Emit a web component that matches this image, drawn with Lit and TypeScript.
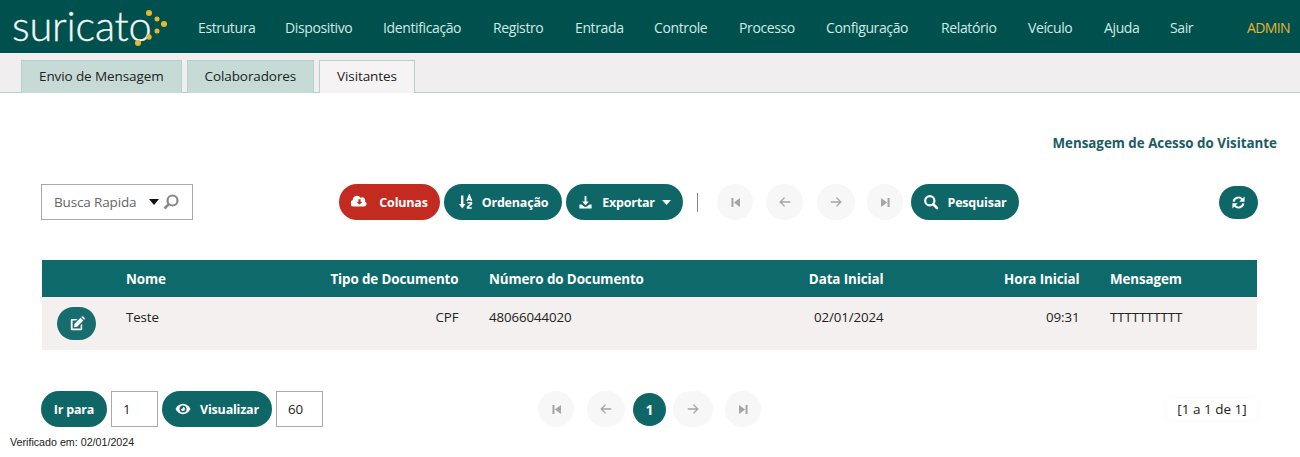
import { LitElement, html, css, svg } from "lit";
import { customElement } from "lit/decorators.js";

const ic = {
  cloud: svg`<path fill="currentColor" d="M13.200 7.100A2.900 2.900 0 0 0 9 3.600 4 4 0 0 0 1.600 5.600v.3a3 3 0 0 0 1 5.900h10a2.500 2.500 0 0 0 .6-4.700z"/><path fill="#c42b20" d="M7 5h2v2.400h1.700L8 10.200 5.300 7.400H7z"/>`,
  sort: svg`<path fill="currentColor" d="M3 1.500h2.400V10h2.100L4.200 14.500 1 10h2z"/><path fill="none" stroke="currentColor" stroke-width="1.600" d="M9 7 11.300 1.500 13.600 7M9.800 5.400h3M9.400 8.800h4v1l-3.800 3.400v.8h4.200"/>`,
  down: svg`<path fill="currentColor" d="M7 1h2v6h2.600L8 10.800 4.400 7H7z"/><path fill="currentColor" d="M1.500 10H4l2.600 2.400h2.800L12 10h2.500v4.500h-13z"/>`,
  first: svg`<path fill="currentColor" d="M3 2.500h2.500v11H3zM6 8l7.500-5.500v11z"/>`,
  last: svg`<path fill="currentColor" d="M10.500 2.500H13v11h-2.500zM10 8l-7.500 5.500v-11z"/>`,
  left: svg`<path fill="none" stroke="currentColor" stroke-width="1.500" d="M14 8H2.500M7.500 3 2.500 8l5 5"/>`,
  right: svg`<path fill="none" stroke="currentColor" stroke-width="1.500" d="M2 8h11.500M8.500 3l5 5-5 5"/>`,
  search: svg`<circle cx="6.800" cy="6.800" r="4.600" fill="none" stroke="currentColor" stroke-width="2.200"/><path stroke="currentColor" stroke-width="2.600" stroke-linecap="round" d="m10.500 10.500 3.500 3.500"/>`,
  sync: svg`<path fill="none" stroke="currentColor" stroke-width="2.300" d="M2.800 7a5.200 5.200 0 0 1 9-2.600L13 6M13.200 9a5.200 5.200 0 0 1-9 2.600L3 10"/><path fill="currentColor" d="M14.500 1.500v5.800H8.700zM1.500 14.500V8.700h5.800z"/>`,
  eye: svg`<path fill="currentColor" fill-rule="evenodd" d="M8 2.800c3.300 0 6 2.200 7.500 5.200-1.500 3-4.200 5.200-7.500 5.200S2 11 .5 8C2 5 4.700 2.800 8 2.800zm0 1.700a3.500 3.500 0 1 0 0 7 3.500 3.500 0 0 0 0-7z"/><path fill="currentColor" d="M8 6a2 2 0 1 1-2 2c.6.300 2.300-.7 2-2z"/>`,
  edit: svg`<path fill="currentColor" d="M2.800 3H8.500L7 4.600H3.600v8h8V9.300l1.600-1.500v5.400a1 1 0 0 1-1 1H2.800a1 1 0 0 1-1-1V4a1 1 0 0 1 1-1z"/><path fill="currentColor" d="M11.500 1.800 14.300 4.600 8.200 10.800l-3.100.400.300-3.200zM12.300 1l.6-.5a1 1 0 0 1 1.300 0l1.400 1.400a1 1 0 0 1 0 1.300l-.5.600z"/>`,
};
const icon = (p: unknown, s = 14) => html`<svg class="i" viewBox="0 0 16 16" width=${s} height=${s}>${p}</svg>`;

const NAV = ["Estrutura", "Dispositivo", "Identificação", "Registro", "Entrada", "Controle", "Processo", "Configuração", "Relatório", "Veículo", "Ajuda", "Sair"];

@customElement("app-root")
export class AppRoot extends LitElement {
  static styles = css`
    :host { display: block; width: 1300px; height: 457px; overflow: hidden; background: #fff; font-family: "Open Sans", "Noto Sans", sans-serif; color: #222; font-size: 13px; }
    .i { display: block; flex: none; }
    header { height: 53px; background: #00514d; display: flex; align-items: center; padding-left: 12px; box-sizing: border-box; }
    .logo { width: 156px; height: 53px; display: flex; align-items: flex-start; position: relative; flex: none; }
    .logo span { font-family: "Lato", sans-serif; font-weight: 300; -webkit-text-stroke: 0.35px #f4f7f4; font-size: 41.500px; letter-spacing: -0.2px; color: #f4f7f4; line-height: 51px; }
    .logo svg { position: absolute; left: -12px; top: 0; }
    nav { margin-left: 30px; display: flex; align-items: center; flex: 1; padding-top: 2px; }
    nav a { width: var(--w); color: #d3e8e3; font-size: 14px; letter-spacing: -0.38px; white-space: nowrap; }
    .admin { color: #eab232; font-size: 14px; letter-spacing: -0.6px; margin-left: auto; padding-right: 10px; }
    .tabs { height: 40px; box-sizing: border-box; background: #f0eeee; border-bottom: 1px solid #a9d2c9; padding: 7px 0 0 21px; display: flex; gap: 5px; }
    .tab { box-sizing: border-box; height: 33px; padding: 0 17px; line-height: 31px; background: #c6dbd5; border: 1px solid #b4d2cb; border-bottom: none; font-size: 13.500px; letter-spacing: -0.1px; color: #222; }
    .tab.on { background: #f5f3f3; }
    .title { text-align: right; padding: 41px 23px 0 0; height: 91px; box-sizing: border-box; font-weight: 700; font-size: 13.350px; line-height: 18px; color: #1b5b64; }
    .bar { height: 36px; display: flex; align-items: center; padding-left: 41px; }
    .search { width: 152px; height: 36px; box-sizing: border-box; border: 1px solid #aaa; display: flex; align-items: center; padding-left: 12px; color: #666; font-size: 13.500px; letter-spacing: -0.15px; }
    .search .caret { margin-left: 13px; color: #111; }
    .search .mag { margin-left: 3px; color: #888; }
    .btn { height: 36px; border-radius: 18px; background: #0e6666; color: #fff; border: 0; display: inline-flex; align-items: center; justify-content: center; gap: 11px; font-family: inherit; font-weight: 700; font-size: 12.500px; letter-spacing: -0.2px; box-sizing: border-box; padding: 0; flex: none; }
    .btn.red { background: #c42b20; }
    .sep { width: 1px; height: 19px; background: #888; margin: 0 19px 0 14px; }
    .c { height: 36px; border-radius: 18px; background: #f7f7f7; color: #a5a5a5; display: flex; align-items: center; justify-content: center; flex: none; }
    .t { margin: 40px 43px 0 42px; display: grid; grid-template-columns: 69px 189px 174px 250px 175px 196px 162px; }
    .t > div { padding: 0 15px; white-space: nowrap; }
    .h { background: #0e6a6a; color: #fff; font-weight: 700; height: 37px; line-height: 38px; font-size: 13.400px; letter-spacing: -0.1px; }
    .r { background: #f3f0ef; height: 53px; padding-top: 10px !important; line-height: 20px; box-sizing: border-box; font-size: 13.300px; letter-spacing: -0.1px; color: #222; }
    .t > .right { text-align: right; padding-right: 15.500px; }
    .edit { width: 39px; height: 33px; border-radius: 17px; background: #176c6e; color: #fff; display: flex; align-items: center; justify-content: center; }
    .t > .r.a { padding: 0 0 0 15px !important; display: flex; align-items: center; }
    .foot { margin-top: 41px; height: 36px; display: flex; align-items: center; padding-left: 41px; font-size: 13px; }
    .inp { width: 47px; height: 36px; box-sizing: border-box; border: 1px solid #aaa; padding-left: 11px; line-height: 34px; color: #222; margin: 0 4px; flex: none; font-size: 13.300px; }
    .pg { display: flex; align-items: center; margin-left: 215px; }
    .cur { width: 33px; height: 33px; border-radius: 50%; background: #0e6666; color: #fff; font-weight: 700; font-size: 14px; display: flex; align-items: center; justify-content: center; }
    .count { margin-left: auto; margin-right: 43px; background: #fff; box-shadow: 0 0 7px rgba(0,0,0,.035); width: 90px; height: 21px; line-height: 21px; text-align: center; font-size: 13.500px; color: #222; }
    .ver { font-family: "Liberation Sans", Arial, sans-serif; font-size: 10.700px; color: #222; padding: 8px 0 0 10px; line-height: 14px; }
  `;

  render() {
    const widths = [87, 98, 110, 82, 79, 85, 87, 115, 87, 76, 66, 60];
    return html`
      <header>
        <div class="logo">
          <span>suricato</span>
          <svg width="180" height="53" viewBox="0 0 180 53">
            <g fill="#e9b72f">
              <circle cx="149" cy="13" r="3"/><circle cx="157" cy="19" r="2.500"/>
              <circle cx="164" cy="24" r="3"/><circle cx="157" cy="31" r="2.500"/>
              <circle cx="149" cy="37" r="2.700"/><circle cx="138" cy="43" r="3"/>
            </g>
          </svg>
        </div>
        <nav>
          ${NAV.map((n, i) => html`<a style="--w:${widths[i]}px">${n}</a>`)}
          <span class="admin">ADMIN</span>
        </nav>
      </header>
      <div class="tabs">
        <div class="tab">Envio de Mensagem</div>
        <div class="tab">Colaboradores</div>
        <div class="tab on">Visitantes</div>
      </div>
      <div class="title">Mensagem de Acesso do Visitante</div>
      <div class="bar">
        <div class="search">Busca Rapida
          <svg class="caret" width="10" height="6" viewBox="0 0 10 6"><path fill="currentColor" d="M0 0h10L5 6z"/></svg>
          <svg class="mag" width="18" height="18" viewBox="0 0 18 18"><circle cx="10.500" cy="7.500" r="5" fill="none" stroke="currentColor" stroke-width="2.200"/><path stroke="currentColor" stroke-width="2.600" d="m6.800 11.200-4.300 4.300"/></svg>
        </div>
        <button class="btn red" style="width:101px;margin-left:146px">${icon(ic.cloud, 17)}Colunas</button>
        <button class="btn" style="width:118px;margin-left:4px;gap:8px">${icon(ic.sort, 16)}Ordenação</button>
        <button class="btn" style="width:117px;margin-left:4px;gap:9px">${icon(ic.down, 15)}<span>Exportar</span><svg width="9" height="5" viewBox="0 0 9 5" style="margin-left:-2px"><path fill="#fff" d="M0 0h9L4.500 5z"/></svg></button>
        <div class="sep"></div>
        <div class="c" style="width:36px">${icon(ic.first, 13)}</div>
        <div class="c" style="width:37px;margin-left:13px">${icon(ic.left, 14)}</div>
        <div class="c" style="width:38px;margin-left:14px">${icon(ic.right, 14)}</div>
        <div class="c" style="width:36px;margin-left:12px">${icon(ic.last, 13)}</div>
        <button class="btn" style="width:108px;margin-left:8px;gap:8px">${icon(ic.search, 16)}Pesquisar</button>
        <button class="btn" style="width:39px;height:33px;margin-left:200px">${icon(ic.sync, 15)}</button>
      </div>
      <div class="t">
        <div class="h"></div><div class="h">Nome</div><div class="h right">Tipo de Documento</div><div class="h">Número do Documento</div><div class="h right">Data Inicial</div><div class="h right">Hora Inicial</div><div class="h">Mensagem</div>
        <div class="r a"><div class="edit">${icon(ic.edit, 16)}</div></div><div class="r">Teste</div><div class="r right">CPF</div><div class="r">48066044020</div><div class="r right">02/01/2024</div><div class="r right">09:31</div><div class="r">TTTTTTTTTT</div>
      </div>
      <div class="foot">
        <button class="btn" style="width:66px">Ir para</button>
        <div class="inp">1</div>
        <button class="btn" style="width:110px;gap:9px">${icon(ic.eye, 16)}Visualizar</button>
        <div class="inp" style="margin-right:0">60</div>
        <div class="pg">
          <div class="c" style="width:36px">${icon(ic.first, 13)}</div>
          <div class="c" style="width:38px;margin-left:13px">${icon(ic.left, 14)}</div>
          <div class="cur" style="margin-left:8px">1</div>
          <div class="c" style="width:40px;margin-left:7px">${icon(ic.right, 14)}</div>
          <div class="c" style="width:36px;margin-left:12px">${icon(ic.last, 13)}</div>
        </div>
        <div class="count">[1 a 1 de 1]</div>
      </div>
      <div class="ver">Verificado em: 02/01/2024</div>
    `;
  }
}
